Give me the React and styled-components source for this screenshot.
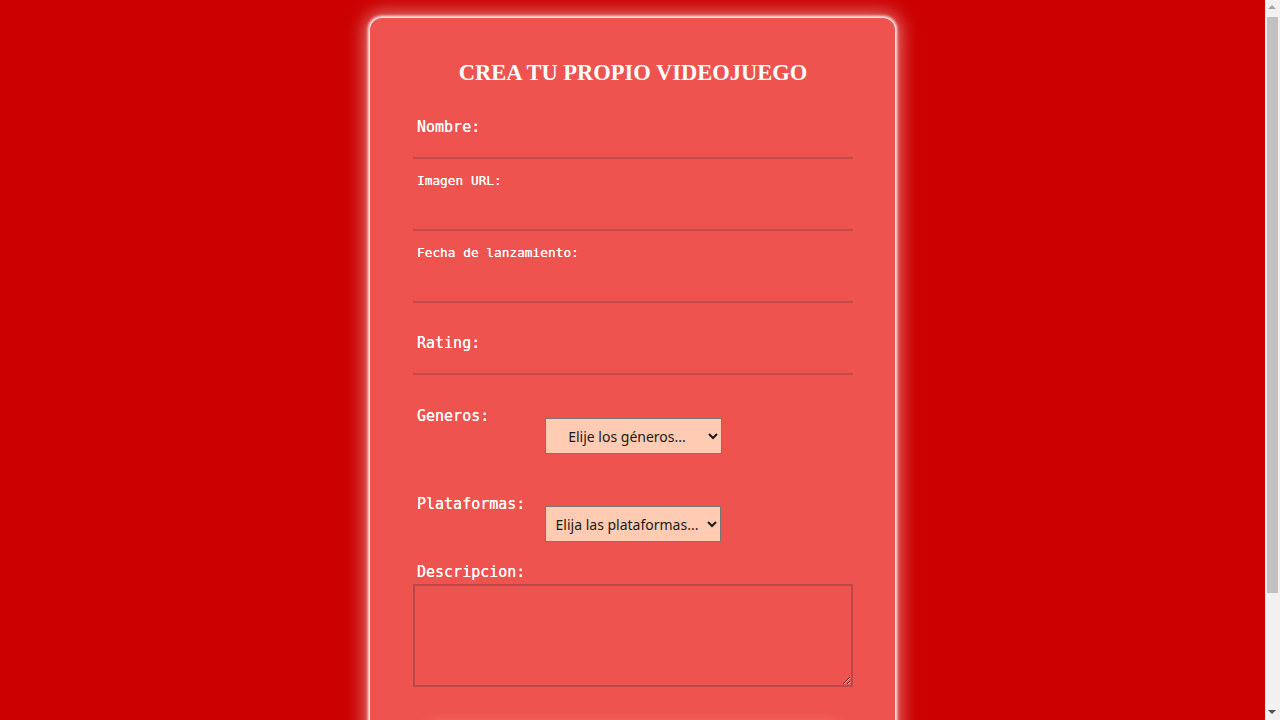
import React from "react";
import styled, { createGlobalStyle } from "styled-components";

const Global = createGlobalStyle`
  html, body { margin: 0; padding: 0; }
  body {
    background: #cc0000;
    font-family: "DejaVu Sans Mono", monospace;
    padding-right: 15px;
  }
`;

const Card = styled.form`
  box-sizing: border-box;
  width: 525px;
  margin: 18px auto 18px;
  padding: 42px 42px 52px 43px;
  background: #ef5350;
  border-radius: 12px;
  box-shadow: 0 0 3px 2px rgba(255, 255, 255, 0.95),
    0 0 18px 6px rgba(255, 255, 255, 0.45);
  display: flex;
  flex-direction: column;
`;

const Title = styled.h2`
  margin: 0 0 1px;
  font-family: "Liberation Serif", "Times New Roman", serif;
  font-weight: bold;
  font-size: 22.5px;
  line-height: 26px;
  color: #fff;
  text-align: center;
`;

const Field = styled.div`
  height: 72px;
  display: flex;
  flex-direction: column;
`;

const Label = styled.label`
  display: block;
  padding-left: 4px;
  padding-top: ${(p) => p.$pad || 0}px;
  font-family: "DejaVu Sans Mono", monospace;
  font-size: ${(p) => (p.$small ? "12.8px" : "15px")};
  line-height: ${(p) => (p.$small ? "16px" : "18px")};
  color: #fff;
  white-space: nowrap;
  text-shadow: 0 0 0.4px #fff;
`;

const LineInput = styled.input`
  margin-top: auto;
  height: 20px;
  padding: 0 4px;
  border: 0;
  border-bottom: 2px solid #c94a4a;
  background: transparent;
  outline: none;
  color: #fff;
  font-family: "DejaVu Sans Mono", monospace;
`;

const Selects = styled.div`
  padding-top: 32px;
  display: flex;
  flex-direction: column;
  gap: 41px;
`;

const SelectRow = styled.div`
  display: grid;
  grid-template-columns: 1fr auto 1fr;
  align-items: start;
`;

const Select = styled.select`
  margin-top: 11px;
  width: ${(p) => p.$w}px;
  height: 36px;
  background: #ffccb3;
  border: 1px solid #767676;
  border-radius: 0;
  color: #1a1a1a;
  font-family: "Noto Sans", "Open Sans", sans-serif;
  font-size: 14px;
  text-align: center;
  text-align-last: center;
  padding: 0 2px;
`;

const DescLabel = styled(Label)`
  margin-top: 21px;
`;

const TextArea = styled.textarea`
  display: block;
  box-sizing: border-box;
  margin-top: 3px;
  width: 440px;
  height: 103px;
  background: transparent;
  border: 2px solid #bd4747;
  resize: both;
  color: #fff;
`;

const Submit = styled.button`
  align-self: center;
  margin-top: 48px;
  width: 410px;
  height: 42px;
  border: 0;
  border-radius: 8px;
  background: #ef5350;
  color: #fff;
  font-family: "DejaVu Sans Mono", monospace;
  font-size: 16px;
  box-shadow: 0 0 14px 6px rgba(255, 255, 255, 0.75);
`;

const Scrollbar = styled.div`
  position: fixed;
  top: 0;
  right: 0;
  width: 15px;
  height: 100vh;
  background: #f1f1f1;
`;

const Thumb = styled.div`
  position: absolute;
  top: 17px;
  left: 2px;
  width: 11px;
  height: 576px;
  background: #c1c1c1;
`;

const Arrow = styled.div`
  position: absolute;
  left: 3px;
  width: 0;
  height: 0;
  border-left: 4.5px solid transparent;
  border-right: 4.5px solid transparent;
  ${(p) =>
    p.$down
      ? `bottom: 6px; border-top: 4.5px solid #505050;`
      : `top: 5px; border-bottom: 4.5px solid #a3a3a3;`}
`;

export default function App() {
  return (
    <>
      <Global />
      <Card onSubmit={(e) => e.preventDefault()}>
        <Title>CREA TU PROPIO VIDEOJUEGO</Title>
        <Field>
          <Label $pad={31}>Nombre:</Label>
          <LineInput type="text" />
        </Field>
        <Field>
          <Label $small $pad={14}>Imagen URL:</Label>
          <LineInput type="text" />
        </Field>
        <Field>
          <Label $small $pad={14}>Fecha de lanzamiento:</Label>
          <LineInput type="text" />
        </Field>
        <Field>
          <Label $pad={31}>Rating:</Label>
          <LineInput type="text" />
        </Field>
        <Selects>
          <SelectRow>
            <Label>Generos:</Label>
            <Select $w={177} defaultValue="">
              <option value="">Elije los géneros...</option>
            </Select>
          </SelectRow>
          <SelectRow>
            <Label>Plataformas:</Label>
            <Select $w={176} defaultValue="">
              <option value="">Elija las plataformas...</option>
            </Select>
          </SelectRow>
        </Selects>
        <DescLabel>Descripcion:</DescLabel>
        <TextArea />
        <Submit type="submit">Crear videojuego</Submit>
      </Card>
      <Scrollbar aria-hidden="true">
        <Arrow />
        <Thumb />
        <Arrow $down />
      </Scrollbar>
    </>
  );
}
